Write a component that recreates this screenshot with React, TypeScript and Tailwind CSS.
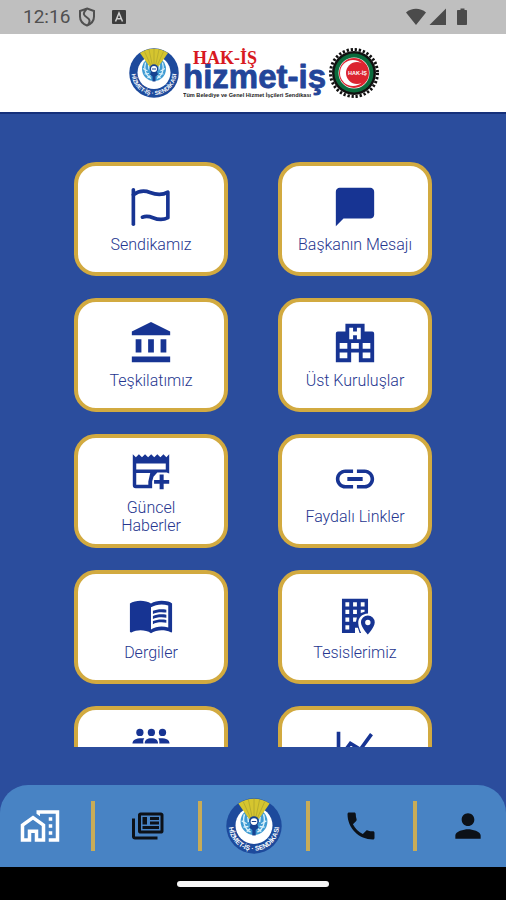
import type { ReactNode } from 'react';
import {
  MdAccountBalance,
  MdChatBubble,
  MdLink,
  MdMenuBook,
  MdOutlineHomeWork,
  MdPerson,
  MdPhone,
} from 'react-icons/md';

function Icon({ children, className = 'h-[46px] w-[46px]' }: { children: ReactNode; className?: string }) {
  return (
    <svg viewBox="0 0 24 24" fill="currentColor" className={className} aria-hidden="true">
      {children}
    </svg>
  );
}

const FlagIcon = () => (
  <Icon>
    <g fill="none" stroke="currentColor" strokeWidth="1.9" strokeLinecap="round" strokeLinejoin="round">
      <path d="M2.800 3V21" />
      <path d="M2.800 5.600C5.500 3.600 8.600 3.300 11.500 4.400S17.500 6.100 20.800 4.200V17.600C18 19.100 15.500 18.600 13 17.600S9.500 16.600 7.500 17.300" />
    </g>
  </Icon>
);

const HospitalIcon = () => (
  <Icon>
    <path d="M2 22V7a1 1 0 0 1 1-1h4V2h10v4h4a1 1 0 0 1 1 1v15h-8v-5h-4v5H2M9 4v6h2V8h2v2h2V4h-2v2h-2V4H9M4 20h4v-3H4v3m0-5h4v-3H4v3m12 5h4v-3h-4v3m0-5h4v-3h-4v3m-6 0h4v-3h-4v3z" />
  </Icon>
);

const NewsPlusIcon = () => (
  <Icon>
    <path
      fillRule="evenodd"
      d="M2.500 3.800L4.100 5.300 5.700 3.800 7.300 5.300 8.900 3.800 10.500 5.300 12.100 3.800 13.700 5.300 15.300 3.800 16.900 5.300 18.500 3.800 20 5.300 21.500 3.800V13.800L20.200 13.300H15.300L13.300 15.500 12.600 18V21.500H4A1.500 1.500 0 0 1 2.500 20ZM4.300 8.600V11.700H19.700V8.600ZM4.300 13.500V19.700H10.600V18L11.600 13.500Z"
    />
    <path d="M16.500 14.300H18.600V17.200H21.500V19.200H18.600V22.100H16.500V19.200H13.600V17.200H16.500Z" />
  </Icon>
);

const BuildingMarkerIcon = () => (
  <Icon>
    <path
      fillRule="evenodd"
      d="M5.200 3.500H18.800V11.200C15.500 11.400 13.600 13.500 13.700 16.300 13.800 18 14.400 19.500 15.200 21.400H14.400L13.500 18.700H12V21.400H5.200ZM7 5.300V7.500H9V5.300ZM11 5.300V7.500H13V5.300ZM15 5.300V7.500H17V5.300ZM7 9.300V11.500H9V9.300ZM11 9.300V11.500H13V9.300ZM15 9.300V11L17 10.300V9.300ZM7 13.300V15.500H9V13.300ZM11 13.300V15.500H12.500L13 13.300ZM7 17.300V19.500H9V17.300Z"
    />
    <path
      fillRule="evenodd"
      d="M18.700 12.200A3.600 3.600 0 0 1 22.300 15.800C22.300 18.300 18.700 22.200 18.700 22.200S15.100 18.300 15.100 15.800A3.600 3.600 0 0 1 18.700 12.200M18.700 14.500A1.400 1.400 0 1 0 18.700 17.300A1.400 1.400 0 1 0 18.700 14.500Z"
    />
  </Icon>
);

const GroupIcon = () => (
  <Icon>
    <circle cx="6.200" cy="7" r="1.900" />
    <circle cx="12.200" cy="7" r="1.900" />
    <circle cx="18" cy="7" r="1.900" />
    <path d="M8.100 12.800H2.300C2.500 10.700 4 10 7.300 10H8.500C7.900 10.900 7.800 11.800 8.100 12.800ZM8.700 12.800C8.700 10.800 10 10 12.200 10S15.700 10.800 15.700 12.800ZM16.300 12.800C16.500 11.800 16.300 10.900 15.900 10H16.900C20.300 10 21.500 10.700 21.700 12.800Z" />
  </Icon>
);

const ChartIcon = () => (
  <Icon>
    <path
      fill="none"
      stroke="currentColor"
      strokeWidth="1.900"
      d="M3.400 2V21H22M4.500 15L9.600 8 14.800 11.200 20.600 3.200"
    />
  </Icon>
);

const NewspapersIcon = () => (
  <Icon className="h-9 w-9">
    <path d="M4 7v12h15v2H4c-2 0-2-2-2-2V7h2m17-2v10H8V5h13m.3-2H7.700C6.760 3 6 3.700 6 4.550v10.900C6 16.310 6.760 17 7.700 17h13.600c.94 0 1.700-.69 1.700-1.550V4.550C23 3.700 22.240 3 21.300 3M9 6h3v5H9V6m11 8H9v-2h11v2m0-6h-6V6h6v2m0 3h-6V9h6v2z" />
  </Icon>
);

function Emblem({ id, className }: { id: string; className: string }) {
  return (
    <svg viewBox="0 0 100 100" className={className} role="img" aria-label="Hizmet-İş">
      <circle cx="50" cy="50" r="49.500" fill="#1d4a9c" />
      <circle cx="50" cy="49" r="33" fill="#fff" />
      <circle cx="50" cy="42" r="24" fill="#3f9bd3" />
      <g stroke="#d8f0fa" strokeWidth="2.500" fill="none">
        <path d="M33 29C29 42 33 55 44 61M67 29C71 42 67 55 56 61" />
        <path d="M28 41L37 46M31 52L40 51M37 60L43 55M72 41L63 46M69 52L60 51M63 60L57 55M39 34L40 43M61 34L60 43" />
      </g>
      <path d="M45 44H55L58 53 53 57V67H47V57L42 53Z" fill="#174291" />
      <path d="M22 10A49.500 49.500 0 0 1 78 10L59 37H41Z" fill="#d5c52f" />
      <path d="M31 7L44 36M40 3L47 36M50 1V36M60 3L53 36M69 7L56 36" stroke="#a79f2d" strokeWidth="1.200" />
      <circle cx="50" cy="41" r="8.500" fill="#174291" />
      <circle cx="50" cy="42" r="6" fill="#fff" />
      <path d="M46 42H54" stroke="#174291" strokeWidth="2" />
      <path id={id} d="M7 36A45 45 0 1 0 93 36" fill="none" />
      <text fill="#fff" fontSize="12" fontWeight="700" fontFamily="Liberation Sans, sans-serif">
        <textPath href={`#${id}`} startOffset="50%" textAnchor="middle">
          HİZMET-İŞ · SENDİKASI
        </textPath>
      </text>
    </svg>
  );
}

function Wordmark() {
  return (
    <svg viewBox="0 0 146 52" className="h-[52px] w-[146px]" role="img" aria-label="Hak-İş Hizmet-İş">
      <text
        x="0"
        y="41"
        fontSize="33"
        fontWeight="700"
        fill="#234599"
        stroke="#234599"
        strokeWidth="0.800"
        strokeLinejoin="round"
        fontFamily="Liberation Sans, sans-serif"
      >
        hizmet-iş
      </text>
      <text x="10" y="17" fontSize="18" fontWeight="700" fill="#d81921" fontFamily="Liberation Serif, serif">
        HAK-İŞ
      </text>
      <text x="0" y="50" fontSize="5.600" fontWeight="700" fill="#222" fontFamily="Liberation Sans, sans-serif">
        Tüm Belediye ve Genel Hizmet İşçileri Sendikası
      </text>
    </svg>
  );
}

function GearBadge() {
  return (
    <svg viewBox="0 0 100 100" className="h-[50px] w-[50px]" role="img" aria-label="Hak-İş">
      <circle cx="50" cy="50" r="47" fill="none" stroke="#111" strokeWidth="6" strokeDasharray="4.600 3.603" />
      <circle cx="50" cy="50" r="44" fill="#111" />
      <circle cx="50" cy="50" r="39" fill="#0b6b3c" />
      <circle cx="50" cy="50" r="31" fill="#fff" />
      <circle cx="50" cy="50" r="30" fill="#dc2430" />
      <circle cx="48" cy="50" r="26" fill="#fff" />
      <circle cx="56" cy="50" r="22" fill="#dc2430" />
      <text x="57" y="54" textAnchor="middle" fontSize="11" fontWeight="700" fill="#fff" fontFamily="Liberation Sans, sans-serif">
        HAK-İŞ
      </text>
    </svg>
  );
}

function StatusBar() {
  return (
    <div className="flex h-[34px] shrink-0 items-center bg-[#bfbfbf] pr-[38px] pl-[23px] text-[#505050]">
      <span className="text-[19px] leading-6">12:16</span>
      <svg viewBox="0 0 18 20" className="ml-2 h-5 w-[18px]" fill="none" stroke="currentColor" strokeWidth="2" aria-hidden="true">
        <path d="M9 1.500L16 4V9.500C16 14 13 17 9 18.500 5 17 2 14 2 9.500V4Z" />
        <path d="M8.500 2C4 7 6 8.500 9 10.500S12.500 14.500 10 18" />
      </svg>
      <svg viewBox="0 0 14 14" className="ml-4 h-3.5 w-3.5" aria-hidden="true">
        <rect width="14" height="14" rx="1" fill="#3c3c3c" />
        <path d="M3.500 11.500L7 3 10.500 11.500M5 8.700H9" fill="none" stroke="#cfcfcf" strokeWidth="1.500" />
      </svg>
      <svg viewBox="0 0 62 20" className="ml-auto h-5 w-[62px]" fill="#4b4b4b" aria-hidden="true">
        <path d="M0 5.500C5.500 .5 14.500 .5 20 5.500L10 18ZM40 1.500V18H23.500ZM53 3H54.500V1.500H58.500V3H60C60.600 3 61 3.400 61 4V17C61 17.600 60.600 18 60 18H52C51.400 18 51 17.600 51 17V4C51 3.400 51.400 3 52 3Z" />
      </svg>
    </div>
  );
}

const menuItems = [
  { id: 'about', label: 'Sendikamız', icon: <FlagIcon /> },
  { id: 'message', label: 'Başkanın Mesajı', icon: <MdChatBubble size={46} /> },
  { id: 'organization', label: 'Teşkilatımız', icon: <MdAccountBalance size={46} /> },
  { id: 'parents', label: 'Üst Kuruluşlar', icon: <HospitalIcon /> },
  { id: 'news', label: 'Güncel\nHaberler', icon: <NewsPlusIcon /> },
  { id: 'links', label: 'Faydalı Linkler', icon: <MdLink size={46} /> },
  { id: 'magazines', label: 'Dergiler', icon: <MdMenuBook size={46} /> },
  { id: 'facilities', label: 'Tesislerimiz', icon: <BuildingMarkerIcon /> },
  { id: 'members', label: '\n\n', name: 'Üyeler', icon: <GroupIcon /> },
  { id: 'stats', label: '', name: 'İstatistikler', icon: <ChartIcon /> },
];

const tabs = [
  { name: 'Ana Sayfa', icon: <MdOutlineHomeWork size={42} className="text-white" /> },
  { name: 'Haberler', icon: <NewspapersIcon /> },
  { name: 'Hizmet-İş', icon: <Emblem id="tab-ring" className="h-14 w-14" /> },
  { name: 'Telefon', icon: <MdPhone size={36} /> },
  { name: 'Profil', icon: <MdPerson size={38} /> },
];

export default function App() {
  return (
    <div className="flex h-screen flex-col overflow-hidden bg-[#2b4d9d] font-[Roboto,sans-serif]">
      <StatusBar />

      <header className="flex h-20 shrink-0 items-center justify-center border-b-2 border-[#15307a] bg-white pl-0.5">
        <Emblem id="header-ring" className="mr-1 h-[50px] w-[50px]" />
        <Wordmark />
        <GearBadge />
      </header>

      <main className="mt-12 mb-[38px] min-h-0 flex-1 overflow-y-auto px-[74px] [scrollbar-width:none]">
        <div className="grid grid-cols-2 gap-x-[50px] gap-y-[22px]">
          {menuItems.map((item) => (
            <button
              key={item.id}
              aria-label={item.name}
              className="flex h-[114px] flex-col items-center justify-center gap-1.5 rounded-[22px] border-4 border-[#d2aa40] bg-white px-4 text-[#173493]"
            >
              {item.icon}
              <span className="min-h-[18px] text-[16px] leading-[18px] font-light whitespace-pre-line text-[#26368f]">
                {item.label}
              </span>
            </button>
          ))}
        </div>
      </main>

      <nav className="h-[82px] shrink-0 overflow-hidden rounded-t-[28px] bg-[#4883c4]">
        <div className="-mr-[14px] -ml-3 flex h-full items-center divide-x-4 divide-[#c8ac58]">
          {tabs.map((tab) => (
            <button
              key={tab.name}
              aria-label={tab.name}
              className="flex h-[50px] flex-1 items-center justify-center text-[#0c1118]"
            >
              {tab.icon}
            </button>
          ))}
        </div>
      </nav>

      <div className="flex h-[33px] shrink-0 items-center justify-center bg-black">
        <div className="h-1.5 w-[30%] rounded-full bg-[#f5f5f5]" />
      </div>
    </div>
  );
}
